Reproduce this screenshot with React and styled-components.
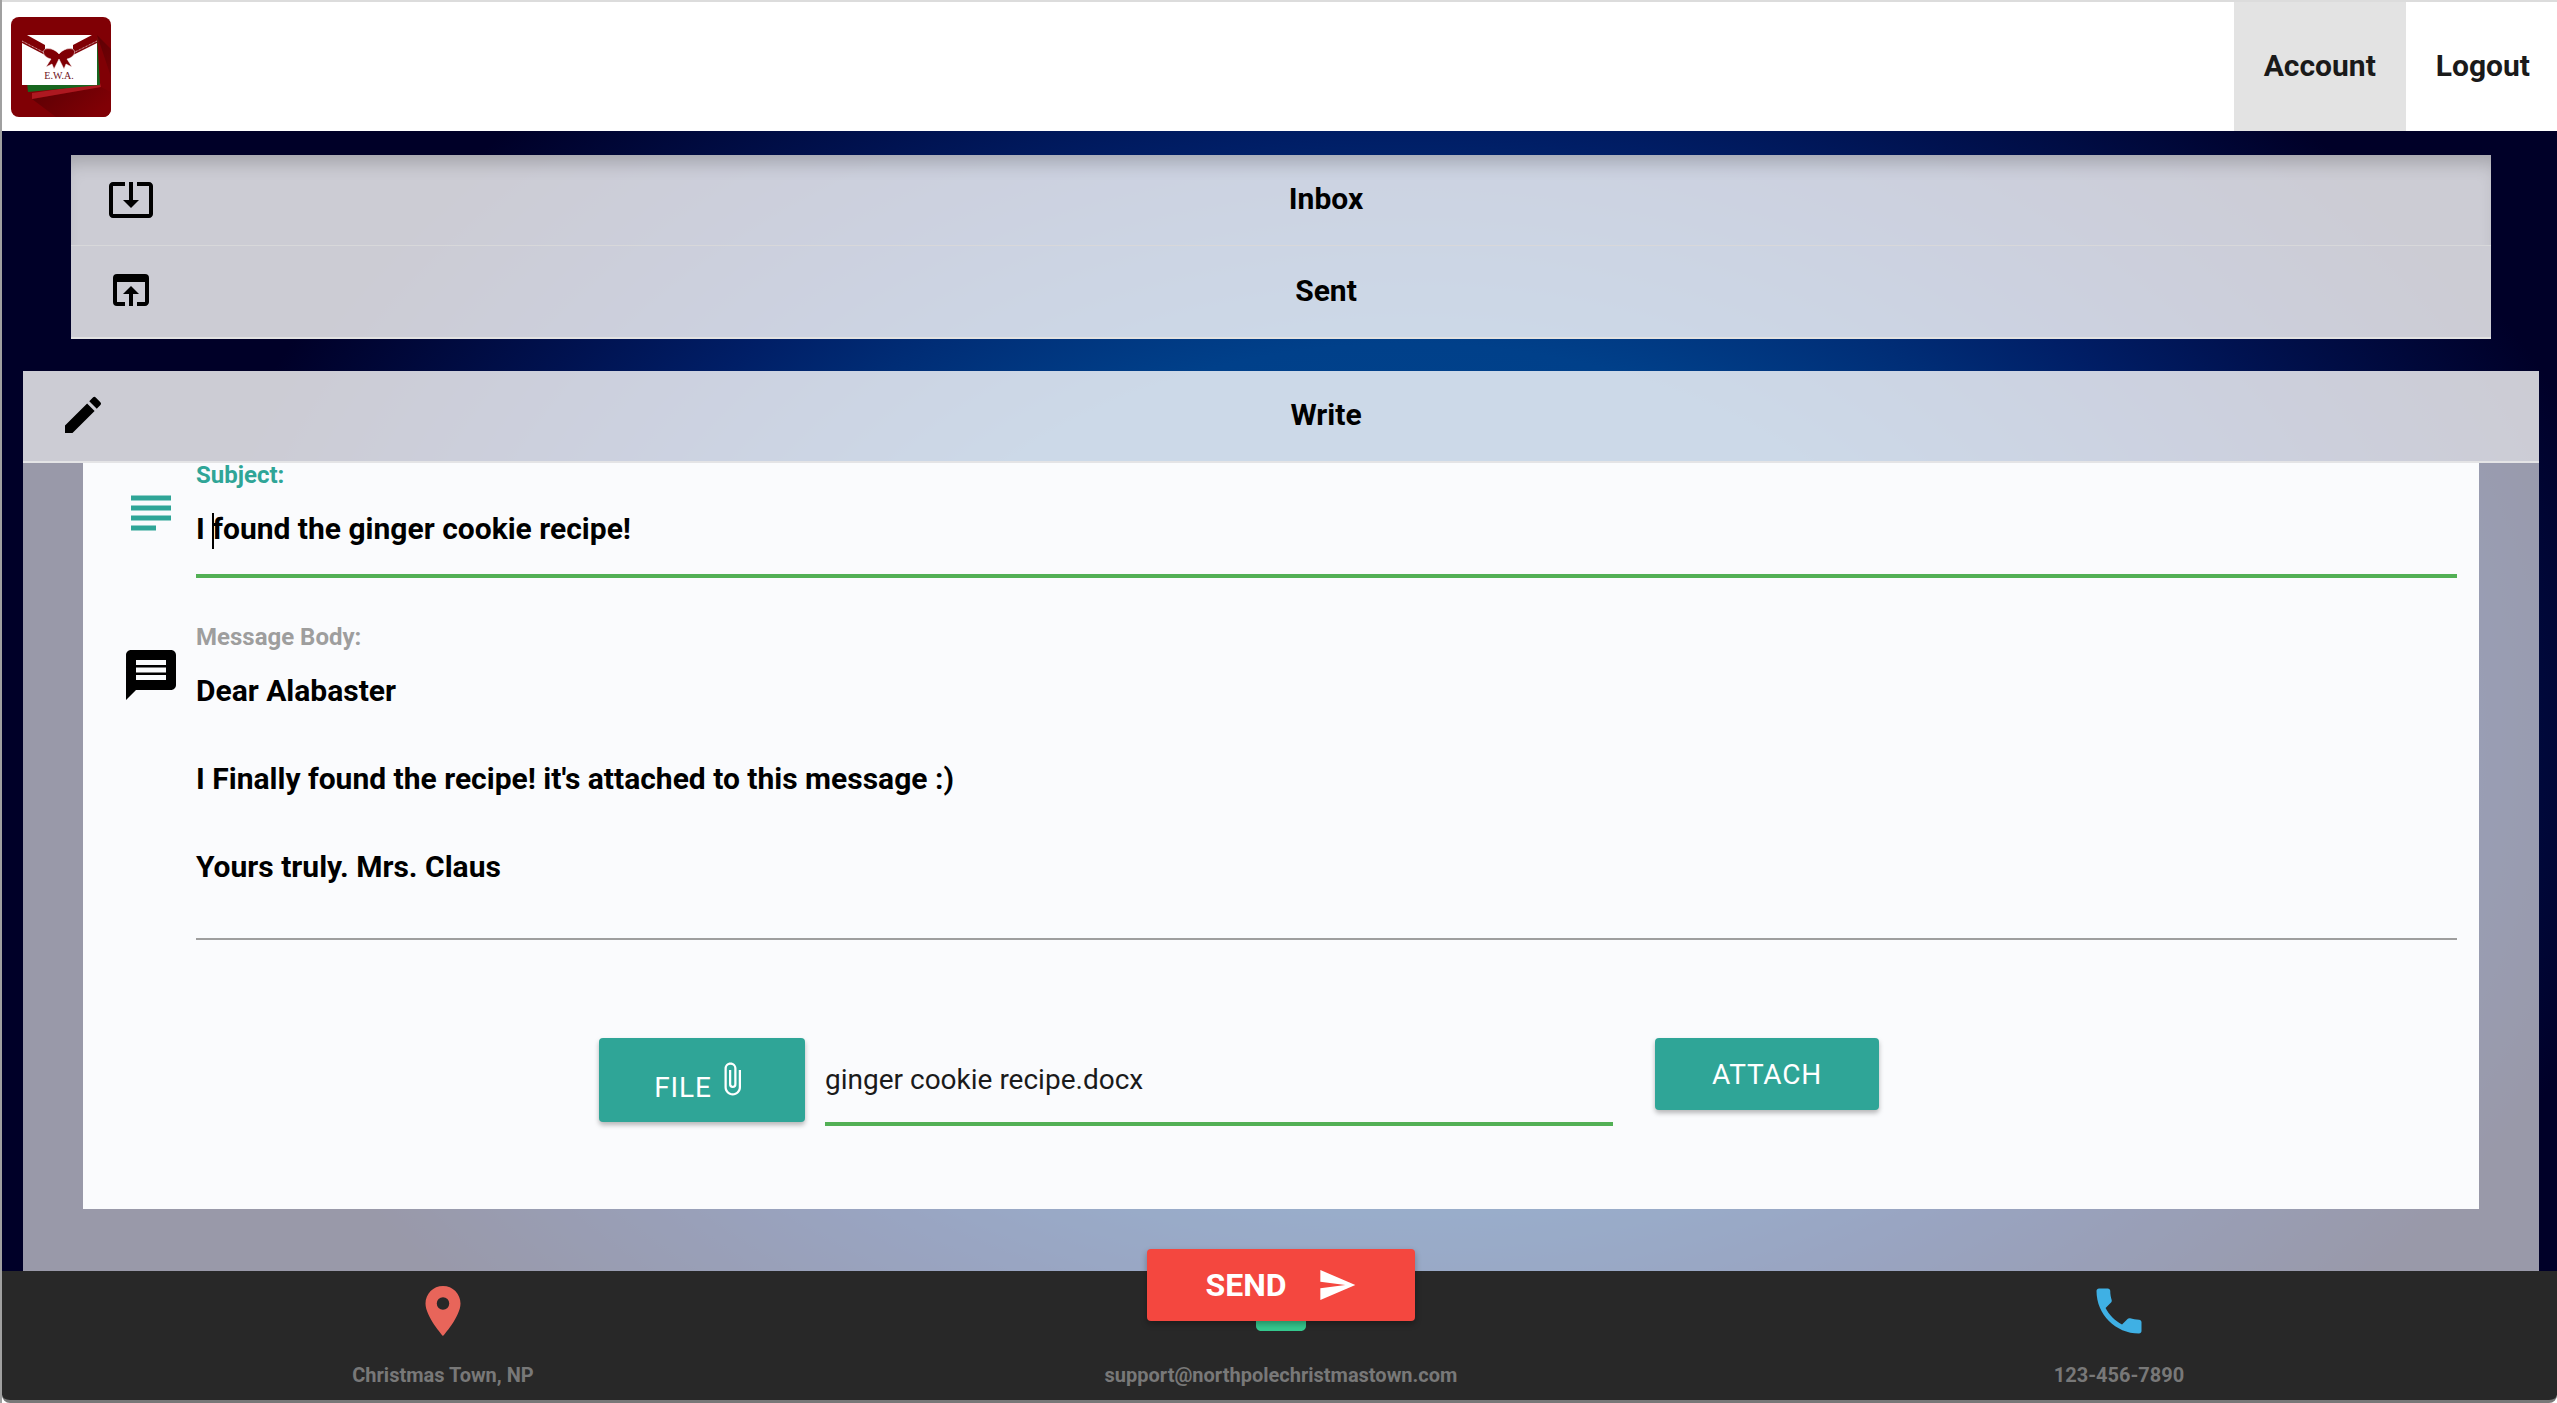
import React from 'react';
import styled, { createGlobalStyle } from 'styled-components';
import {
  MdSystemUpdateAlt,
  MdOpenInBrowser,
  MdEdit,
  MdSubject,
  MdMessage,
  MdAttachFile,
  MdSend,
  MdPlace,
  MdEmail,
  MdPhone,
} from 'react-icons/md';

const GlobalStyle = createGlobalStyle`
  html, body {
    margin: 0;
    padding: 0;
    background: #fff;
  }
  body {
    font-family: Roboto, "Liberation Sans", sans-serif;
  }
`;

const Page = styled.div`
  box-sizing: border-box;
  display: flex;
  flex-direction: column;
  height: 1403px;
  border-left: 2px solid #a0a0a0;
  overflow: hidden;
`;

const Nav = styled.nav`
  display: flex;
  justify-content: space-between;
  height: 129px;
  flex: none;
  border-top: 2px solid #dcdcdc;
  background: #fff;
`;

const LogoBox = styled.div`
  padding: 15px 0 0 9px;
`;

const NavLinks = styled.div`
  display: flex;
`;

const NavLink = styled.a`
  display: flex;
  align-items: center;
  padding: 0 ${(p) => (p.$active ? 30 : 27)}px 2px 30px;
  font-size: 30px;
  font-weight: 700;
  color: #1a1a1a;
  background: ${(p) => (p.$active ? '#e3e3e3' : 'transparent')};
`;

const Main = styled.main`
  flex: 1;
  display: flex;
  flex-direction: column;
  min-height: 0;
  background: radial-gradient(ellipse 1250px 870px at 55% 53%, #004b94 0%, #00408a 45%, #002d76 59%, #001e66 69%, #001250 80%, #000028 100%);
`;

const MailboxList = styled.ul`
  list-style: none;
  margin: 24px 66px 0 69px;
  padding: 0;
  border-bottom: 2px solid #e2e2e2;
`;

const PanelHeader = styled.div`
  box-sizing: border-box;
  display: flex;
  align-items: center;
  height: ${(p) => p.$height}px;
  padding-bottom: 3px;
  background: rgba(255, 255, 255, 0.8);
  font-size: 30px;
  font-weight: 700;
  color: #000;
  border-bottom: ${(p) => (p.$rule ? '1px solid #d8d8da' : 'none')};
  box-shadow: ${(p) => (p.$shade ? 'inset 0 16px 18px -8px rgba(0, 0, 0, 0.2)' : 'none')};
`;

const HeaderIcon = styled.span`
  display: flex;
  flex: none;
  width: 48px;
  margin: 0 6px 0 36px;
  font-size: 48px;
`;

const HeaderTitle = styled.span`
  flex: 1;
  text-align: center;
`;

const WritePanel = styled.section`
  flex: 1;
  display: flex;
  flex-direction: column;
  min-height: 0;
  margin: 32px 18px 0 21px;
`;

const WriteHeader = styled(PanelHeader)`
  border-bottom: 2px solid #e4e4e6;
  flex: none;
`;

const WriteBackdrop = styled.div`
  flex: 1;
  display: flex;
  padding: 0 60px 62px;
  background: rgba(255, 255, 255, 0.6);
`;

const FormCard = styled.form`
  flex: 1;
  background: #fafbfd;
`;

const FieldRow = styled.div`
  display: flex;
  margin-top: ${(p) => p.$top || 0}px;
  padding-right: 22px;
`;

const FieldIcon = styled.div`
  flex: none;
  box-sizing: border-box;
  width: 113px;
  padding: 20px 0 0 38px;
  font-size: 60px;
  line-height: 0;
  color: ${(p) => p.$color};
`;

const Field = styled.div`
  flex: 1;
  min-width: 0;
`;

const FieldLabel = styled.label`
  display: block;
  height: 24px;
  font-size: 24px;
  line-height: 24px;
  font-weight: 700;
  color: ${(p) => p.$color};
`;

const FieldValue = styled.div`
  margin-top: 20px;
  padding-bottom: ${(p) => p.$pad}px;
  font-size: 30px;
  line-height: 44px;
  font-weight: 700;
  color: #000;
  border-bottom: ${(p) => p.$rule};
`;

const Caret = styled.span`
  display: inline-block;
  width: 2px;
  height: 36px;
  margin-right: -2px;
  vertical-align: middle;
  background: #000;
`;

const AttachRow = styled.div`
  display: flex;
  align-items: flex-start;
  margin: 98px 0 0 516px;
`;

const TealButton = styled.button`
  display: flex;
  justify-content: center;
  align-items: ${(p) => (p.$low ? 'flex-end' : 'center')};
  flex: none;
  box-sizing: border-box;
  width: ${(p) => p.$width}px;
  height: ${(p) => p.$height}px;
  padding: 0 0 ${(p) => (p.$low ? 18 : 0)}px;
  margin-left: ${(p) => p.$gap || 0}px;
  border: none;
  border-radius: 4px;
  background: #2fa597;
  color: #fff;
  font-family: inherit;
  font-size: 28px;
  font-weight: 400;
  letter-spacing: 0.8px;
  box-shadow: 0 3px 5px rgba(0, 0, 0, 0.28);
`;

const ClipIcon = styled(MdAttachFile)`
  font-size: 36px;
  margin: 0 0 7px 2px;
`;

const FileName = styled.div`
  box-sizing: border-box;
  width: 788px;
  height: 88px;
  margin-left: 20px;
  padding-top: 22px;
  font-size: 28px;
  line-height: 40px;
  color: #1a1a1a;
  border-bottom: 4px solid #52b055;
`;

const Footer = styled.footer`
  position: relative;
  flex: none;
  box-sizing: border-box;
  display: grid;
  grid-template-columns: repeat(3, 838px);
  height: 132px;
  padding: 10px 0 0 22px;
  background: #282828;
  border-bottom: 3px solid #787878;
  border-radius: 0 0 8px 8px;
`;

const Contact = styled.div`
  display: flex;
  flex-direction: column;
  align-items: center;
`;

const ContactIcon = styled.span`
  display: flex;
  height: 60px;
  font-size: 60px;
  color: ${(p) => p.$color};
`;

const ContactText = styled.span`
  margin-top: 22px;
  font-size: 20px;
  line-height: 24px;
  font-weight: 700;
  color: #787878;
`;

const SendButton = styled.button`
  position: absolute;
  top: -22px;
  left: 1145px;
  display: flex;
  align-items: center;
  justify-content: center;
  gap: 30px;
  width: 268px;
  height: 72px;
  padding: 0;
  border: none;
  border-radius: 4px;
  background: #f4473f;
  color: #fff;
  font-family: inherit;
  font-size: 32px;
  font-weight: 700;
  box-shadow: 0 3px 6px rgba(0, 0, 0, 0.3);
`;

const SendIcon = styled(MdSend)`
  font-size: 40px;
`;

const Logo = () => (
  <svg width="100" height="100" viewBox="0 0 100 100">
    <defs>
      <clipPath id="logoClip">
        <rect width="100" height="100" rx="8" />
      </clipPath>
      <linearGradient id="logoShade" x1="0.2" y1="0.1" x2="0.9" y2="0.9">
        <stop offset="0" stopColor="#4e0003" />
        <stop offset="1" stopColor="#800005" />
      </linearGradient>
    </defs>
    <g clipPath="url(#logoClip)">
      <rect width="100" height="100" fill="#800005" />
      <polygon points="86,18 100,32 100,75 90,70 21,82 45,100 100,100 100,60" fill="url(#logoShade)" />
      <polygon points="21,76 89,66 90,70 21,82" fill="#ad1820" />
      <polygon points="16,66 86,20 89,68 17,75" fill="#17661f" />
      <rect x="11" y="18" width="75" height="50" fill="#fff" />
      <polygon points="11,18 16,18 34,28 34,38 11,26" fill="#800005" />
      <polygon points="86,18 81,18 62,28 62,38 86,26" fill="#800005" />
      <path d="M11 24 L34 36 M86 24 L62 36" stroke="#fff" strokeWidth="0.7" strokeDasharray="1 0.6" />
      <path
        d="M48 37 C44 32 36 30 33 33 C31 37 35 41 40 42 L35 50 L41 47 L43 52 L48 42 L53 52 L55 47 L61 50 L56 42 C61 41 65 37 63 33 C60 30 52 32 48 37 Z"
        fill="#800005"
        stroke="#fff"
        strokeWidth="0.5"
      />
      <text x="48" y="62" fontFamily="'Liberation Serif', serif" fontSize="10" fill="#6e1020" textAnchor="middle">
        E.W.A.
      </text>
    </g>
  </svg>
);

const App = () => {
  return (
    <Page>
      <GlobalStyle />
      <Nav>
        <LogoBox>
          <Logo />
        </LogoBox>
        <NavLinks>
          <NavLink $active>Account</NavLink>
          <NavLink>Logout</NavLink>
        </NavLinks>
      </Nav>

      <Main>
        <MailboxList>
          <li>
            <PanelHeader $height={91} $rule $shade>
              <HeaderIcon><MdSystemUpdateAlt /></HeaderIcon>
              <HeaderTitle>Inbox</HeaderTitle>
            </PanelHeader>
          </li>
          <li>
            <PanelHeader $height={91}>
              <HeaderIcon><MdOpenInBrowser /></HeaderIcon>
              <HeaderTitle>Sent</HeaderTitle>
            </PanelHeader>
          </li>
        </MailboxList>

        <WritePanel>
          <WriteHeader $height={92}>
            <HeaderIcon><MdEdit /></HeaderIcon>
            <HeaderTitle>Write</HeaderTitle>
          </WriteHeader>
          <WriteBackdrop>
            <FormCard>
              <FieldRow>
                <FieldIcon $color="#2fa597"><MdSubject /></FieldIcon>
                <Field>
                  <FieldLabel $color="#2fa597">Subject:</FieldLabel>
                  <FieldValue $pad={23} $rule="4px solid #52b055">
                    I <Caret />found the ginger cookie recipe!
                  </FieldValue>
                </Field>
              </FieldRow>

              <FieldRow $top={47}>
                <FieldIcon $color="#000"><MdMessage /></FieldIcon>
                <Field>
                  <FieldLabel $color="#9e9e9e">Message Body:</FieldLabel>
                  <FieldValue $pad={49} $rule="2px solid #9e9e9e">
                    Dear Alabaster
                    <br />
                    <br />
                    I Finally found the recipe! it's attached to this message :)
                    <br />
                    <br />
                    Yours truly. Mrs. Claus
                  </FieldValue>
                </Field>
              </FieldRow>

              <AttachRow>
                <TealButton type="button" $width={206} $height={84} $low>
                  FILE<ClipIcon />
                </TealButton>
                <FileName>ginger cookie recipe.docx</FileName>
                <TealButton type="button" $width={224} $height={72} $gap={42}>
                  ATTACH
                </TealButton>
              </AttachRow>
            </FormCard>
          </WriteBackdrop>
        </WritePanel>
      </Main>

      <Footer>
        <Contact>
          <ContactIcon $color="#e8655a"><MdPlace /></ContactIcon>
          <ContactText>Christmas Town, NP</ContactText>
        </Contact>
        <Contact>
          <ContactIcon $color="#35c98f"><MdEmail /></ContactIcon>
          <ContactText>support@northpolechristmastown.com</ContactText>
        </Contact>
        <Contact>
          <ContactIcon $color="#3fb0e4"><MdPhone /></ContactIcon>
          <ContactText>123-456-7890</ContactText>
        </Contact>
        <SendButton type="button">
          SEND
          <SendIcon />
        </SendButton>
      </Footer>
    </Page>
  );
};

export default App;
